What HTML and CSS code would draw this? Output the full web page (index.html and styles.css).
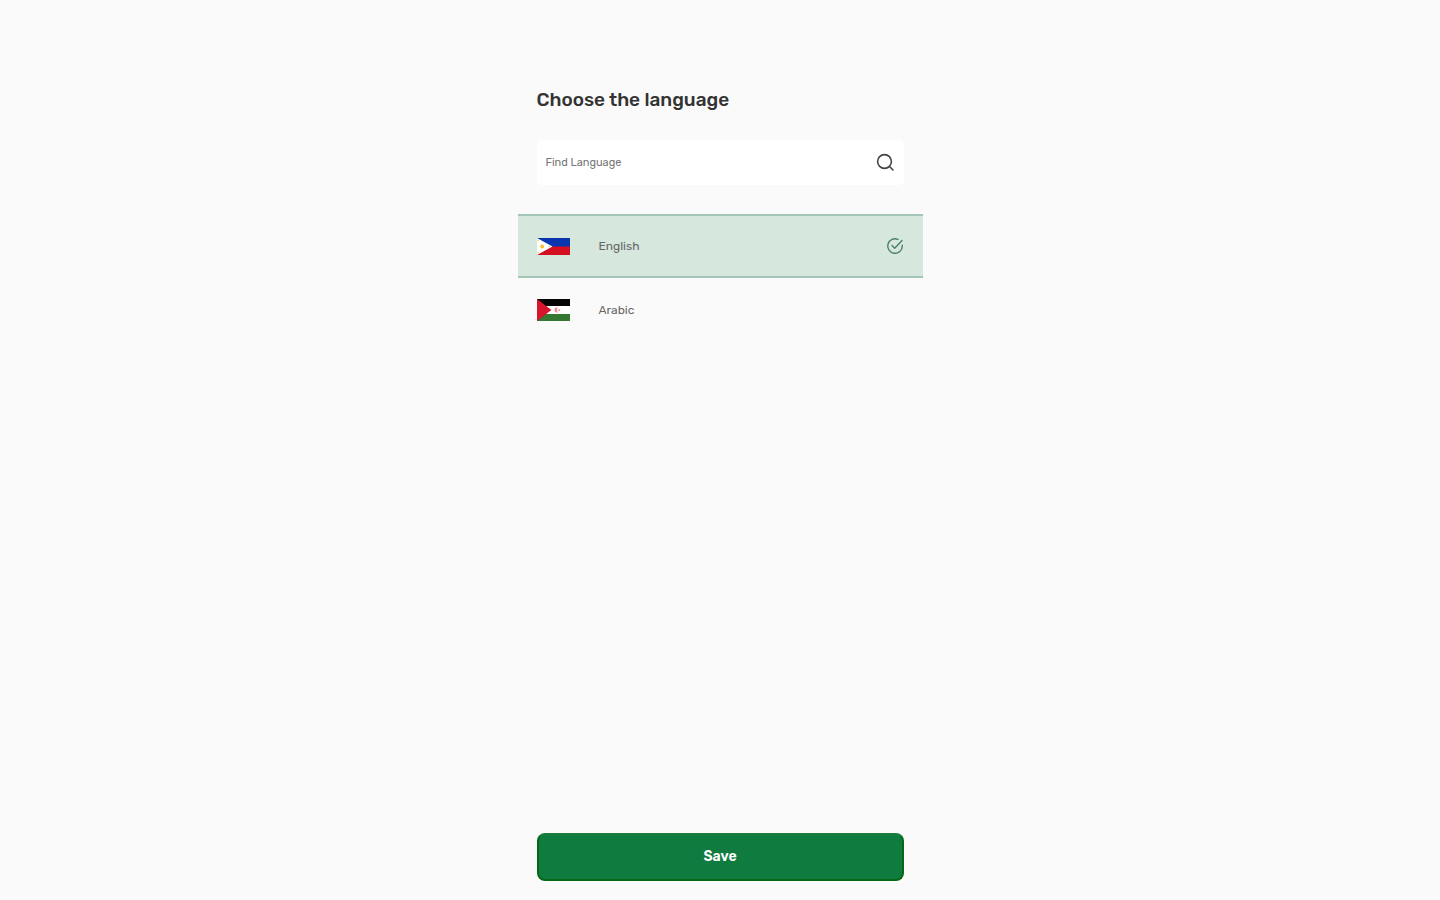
FILE: index.html
```html
<!DOCTYPE html>
<html lang="en">
<head>
<meta charset="utf-8">
<meta name="viewport" content="width=device-width, initial-scale=1">
<title>Choose the language</title>
<link rel="stylesheet" href="styles.css">
</head>
<body>
<form class="page">
  <h1 class="title">Choose the language</h1>
  <div class="search">
    <input class="search-input" type="text" placeholder="Find Language" aria-label="Find Language">
    <button class="search-button" type="button" aria-label="Search">
      <svg class="icon" viewBox="0 0 20 20" fill="none" stroke="#444" stroke-width="1.600" stroke-linecap="round"><circle cx="9.500" cy="8.500" r="6.900"/><path d="M14.500 13.500 18 17"/></svg>
    </button>
  </div>
  <div class="languages" role="radiogroup" aria-label="Language">
    <label class="language">
      <input class="language-radio" type="radio" name="language" value="en" checked>
      <svg class="flag flag-ph" viewBox="0 0 32 17" preserveAspectRatio="none"><path fill="#0b35ae" d="M0 0h32v9H0z"/><path fill="#d40f20" d="M0 8.500h32V17H0z"/><path fill="#fff" d="M0 0 15 8.500 0 17z"/><circle cx="5" cy="8.500" r="1.900" fill="#f5c033"/><g fill="#f5c033"><circle cx="1.200" cy="2.600" r=".7"/><circle cx="1.200" cy="14.400" r=".7"/><circle cx="12" cy="8.500" r=".7"/></g></svg>
      <span class="language-name">English</span>
      <svg class="check" viewBox="0 0 18 18" fill="none" stroke="#4d8069" stroke-width="1.400" stroke-linecap="round" stroke-linejoin="round"><path d="M16.300 8.300V9a7.300 7.300 0 1 1-4.300-6.650"/><path d="M6 8.500 8.700 11.200 16 3.500"/></svg>
    </label>
    <label class="language">
      <input class="language-radio" type="radio" name="language" value="ar">
      <svg class="flag flag-eh" viewBox="0 0 32 22" preserveAspectRatio="none"><path fill="#fff" d="M0 0h32v22H0z"/><path fill="#050505" d="M0 0h32v7H0z"/><path fill="#347832" d="M0 15h32v7H0z"/><path fill="#d9142d" d="M0 0 14 11 0 22z"/><path d="M20.500 8.600a2.600 2.600 0 1 0 0 4.800 2.900 2.900 0 0 1 0-4.800z" fill="#e98a95"/><path d="m21.500 9.500.4 1.100h1.200l-1 .7.400 1.200-1-.7-1 .7.400-1.200-1-.7h1.200z" fill="#e98a95"/></svg>
      <span class="language-name">Arabic</span>
      <svg class="check" viewBox="0 0 18 18" fill="none" stroke="#4d8069" stroke-width="1.400" stroke-linecap="round" stroke-linejoin="round"><path d="M16.300 8.300V9a7.300 7.300 0 1 1-4.300-6.650"/><path d="M6 8.500 8.700 11.200 16 3.500"/></svg>
    </label>
  </div>
  <button class="save" type="button">Save</button>
</form>
</body>
</html>
```
FILE: styles.css
```css
* { box-sizing: border-box; }

body {
  margin: 0;
  background: #fafafa;
  color: #333;
  font-family: Rubik, Roboto, "Liberation Sans", sans-serif;
}

.page {
  display: flex;
  flex-direction: column;
  width: 100%;
  max-width: 405px;
  min-height: 100vh;
  margin: 0 auto;
  padding: 88px 0 19px;
}

.title {
  margin: 0 19px 28px;
  font-size: 19px;
  font-weight: 500;
  line-height: 24px;
}

.search {
  display: flex;
  align-items: center;
  height: 45px;
  margin: 0 19px 29px;
  padding: 0 9px;
  border-radius: 5px;
  background: #fff;
}

.search-input {
  flex: 1;
  min-width: 0;
  padding: 0;
  border: 0;
  outline: 0;
  background: none;
  color: #444;
  font: 400 11px/16px Rubik, Roboto, "Liberation Sans", sans-serif;
}

.search-input::placeholder {
  color: #777;
  opacity: 1;
}

.search-button {
  display: flex;
  padding: 0;
  border: 0;
  background: none;
}

.icon {
  width: 20px;
  height: 20px;
}

.language {
  display: flex;
  align-items: center;
  height: 64px;
  padding: 0 19px;
  border: solid transparent;
  border-width: 2px 0;
}

.language:has(:checked) {
  border-color: #a3c6b7;
  background: #d6e7dd;
}

.language-radio {
  position: absolute;
  opacity: 0;
}

.flag {
  width: 33px;
  margin-right: 29px;
}

.flag-ph { height: 17px; }
.flag-eh { height: 22px; }

.language-name {
  flex: 1;
  color: #666;
  font-size: 12px;
  line-height: 16px;
}

.check {
  width: 18px;
  height: 18px;
  visibility: hidden;
}

.language-radio:checked ~ .check { visibility: visible; }

.save {
  height: 48px;
  margin: auto 19px 0;
  border: 2px solid #056815;
  border-top-color: #187d3f;
  border-radius: 8px;
  background: #107b3e;
  color: #fff;
  font: 600 14px/16px Rubik, Roboto, "Liberation Sans", sans-serif;
}
```
